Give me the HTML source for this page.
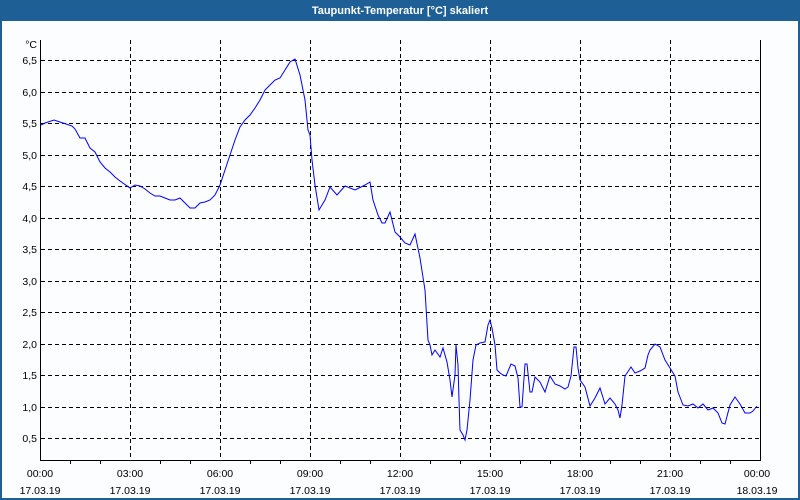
<!DOCTYPE html>
<html><head><meta charset="utf-8"><style>
html,body{margin:0;padding:0;width:800px;height:500px;overflow:hidden;background:#fff}
</style></head><body>
<svg width="800" height="500" xmlns="http://www.w3.org/2000/svg" font-family="Liberation Sans, sans-serif" font-size="10.5">
<rect x="0" y="0" width="800" height="500" fill="#1e5f96"/>
<rect x="2" y="21" width="796" height="477" fill="#fcfdfe"/>
<text x="400" y="14" fill="#fff" font-weight="bold" font-size="11" text-anchor="middle">Taupunkt-Temperatur [°C] skaliert</text>
<g stroke="#000" stroke-width="1" stroke-dasharray="4,3" shape-rendering="crispEdges">
<line x1="41" y1="60.5" x2="760" y2="60.5"/><line x1="41" y1="92.5" x2="760" y2="92.5"/><line x1="41" y1="123.5" x2="760" y2="123.5"/><line x1="41" y1="155.5" x2="760" y2="155.5"/><line x1="41" y1="186.5" x2="760" y2="186.5"/><line x1="41" y1="218.5" x2="760" y2="218.5"/><line x1="41" y1="249.5" x2="760" y2="249.5"/><line x1="41" y1="281.5" x2="760" y2="281.5"/><line x1="41" y1="312.5" x2="760" y2="312.5"/><line x1="41" y1="344.5" x2="760" y2="344.5"/><line x1="41" y1="375.5" x2="760" y2="375.5"/><line x1="41" y1="407.5" x2="760" y2="407.5"/><line x1="41" y1="438.5" x2="760" y2="438.5"/>
<line x1="130.5" y1="40" x2="130.5" y2="460"/><line x1="220.5" y1="40" x2="220.5" y2="460"/><line x1="310.5" y1="40" x2="310.5" y2="460"/><line x1="400.5" y1="40" x2="400.5" y2="460"/><line x1="490.5" y1="40" x2="490.5" y2="460"/><line x1="580.5" y1="40" x2="580.5" y2="460"/><line x1="670.5" y1="40" x2="670.5" y2="460"/>
</g>
<path d="M40.5 40V460.5H760.5V40" fill="none" stroke="#000" shape-rendering="crispEdges"/>
<g stroke="#000" shape-rendering="crispEdges">
<line x1="70.5" y1="460" x2="70.5" y2="464"/><line x1="100.5" y1="460" x2="100.5" y2="464"/><line x1="160.5" y1="460" x2="160.5" y2="464"/><line x1="190.5" y1="460" x2="190.5" y2="464"/><line x1="250.5" y1="460" x2="250.5" y2="464"/><line x1="280.5" y1="460" x2="280.5" y2="464"/><line x1="340.5" y1="460" x2="340.5" y2="464"/><line x1="370.5" y1="460" x2="370.5" y2="464"/><line x1="430.5" y1="460" x2="430.5" y2="464"/><line x1="460.5" y1="460" x2="460.5" y2="464"/><line x1="520.5" y1="460" x2="520.5" y2="464"/><line x1="550.5" y1="460" x2="550.5" y2="464"/><line x1="610.5" y1="460" x2="610.5" y2="464"/><line x1="640.5" y1="460" x2="640.5" y2="464"/><line x1="700.5" y1="460" x2="700.5" y2="464"/><line x1="730.5" y1="460" x2="730.5" y2="464"/>
</g>
<g fill="#000" text-anchor="end">
<text x="37" y="48">°C</text>
<text x="37" y="64">6,5</text><text x="37" y="96">6,0</text><text x="37" y="127">5,5</text><text x="37" y="159">5,0</text><text x="37" y="190">4,5</text><text x="37" y="222">4,0</text><text x="37" y="253">3,5</text><text x="37" y="285">3,0</text><text x="37" y="316">2,5</text><text x="37" y="348">2,0</text><text x="37" y="379">1,5</text><text x="37" y="411">1,0</text><text x="37" y="442">0,5</text>
</g>
<g fill="#000" text-anchor="middle">
<text x="40" y="477">00:00</text><text x="40" y="494">17.03.19</text>
<text x="130" y="477">03:00</text><text x="130" y="494">17.03.19</text>
<text x="220" y="477">06:00</text><text x="220" y="494">17.03.19</text>
<text x="310" y="477">09:00</text><text x="310" y="494">17.03.19</text>
<text x="400" y="477">12:00</text><text x="400" y="494">17.03.19</text>
<text x="490" y="477">15:00</text><text x="490" y="494">17.03.19</text>
<text x="580" y="477">18:00</text><text x="580" y="494">17.03.19</text>
<text x="670" y="477">21:00</text><text x="670" y="494">17.03.19</text>
<text x="757" y="477">00:00</text><text x="757" y="494">18.03.19</text>
</g>
<polyline fill="none" stroke="#0000ff" stroke-width="1" points="41,125 45,123 54,120 60,122 66,124 72,126 75,129 80,138 85,138 90,148 95,152 100,162 105,168 110,172 115,177 120,181 130,188 135,185 140,186 145,189 150,193 155,196 160,196 165,198 170,200 175,200 180,198 185,203 190,208 195,208 200,203 205,202 210,200 215,195 220,185 225,170 230,155 235,140 240,127 245,120 250,115 255,108 260,100 265,90 270,85 275,80 280,78 285,70 290,62 295,59 300,75 305,100 308,130 310,135 312,160 315,185 319,210 325,200 330,187 337,195 345,186 355,190 365,185 370,182 373,200 378,215 382,223 385,223 390,212 395,232 400,237 405,243 410,245 415,234 420,258 425,290 428,340 430,345 432,355 435,350 440,357 443,348 447,362 450,380 452,397 455,375 456,345 458,365 459,400 460,430 463,435 465,440 467,430 470,400 473,360 476,345 480,343 485,342 488,325 490,320 492,328 495,345 497,370 500,373 503,375 506,376 511,364 515,366 518,378 520,407 522,407 525,364 527,364 530,392 532,392 535,377 540,382 545,392 550,376 555,384 560,386 565,389 568,387 571,376 574,347 576,347 578,368 580,380 585,387 590,406 595,398 600,388 605,404 610,398 615,404 618,410 620,418 622,405 625,376 631,367 635,373 640,371 645,368 648,355 650,350 655,344 660,347 665,360 670,368 675,376 678,392 683,405 688,406 693,404 698,408 703,404 708,410 713,408 718,413 722,423 725,424 730,405 735,397 740,404 745,413 750,413 753,411 757,406"/>
</svg>
</body></html>
